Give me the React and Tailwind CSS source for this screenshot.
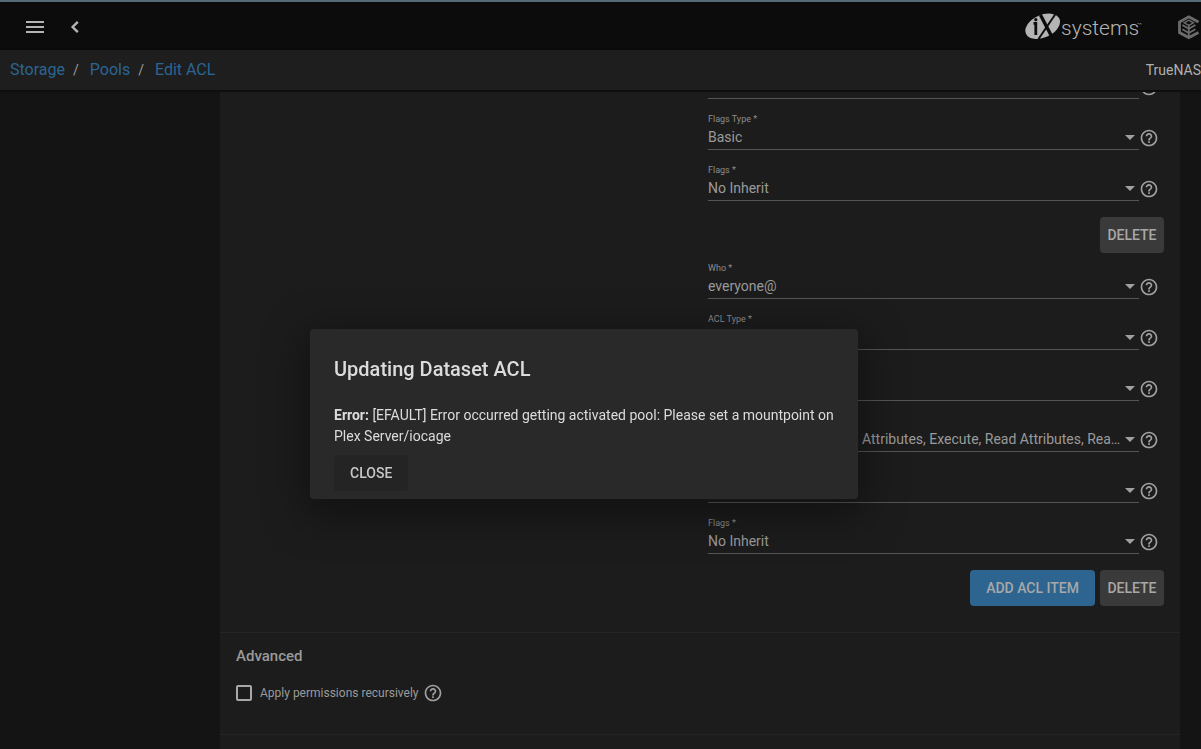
import { MdMenu, MdHelpOutline, MdArrowDropDown } from 'react-icons/md'

const CRUMBS = ['Storage', 'Pools', 'Edit ACL']

const FIRST_ITEM = [
  { id: 'perms-0', value: '' },
  { id: 'flagsType-0', label: 'Flags Type *', value: 'Basic' },
  { id: 'flags-0', label: 'Flags *', value: 'No Inherit' },
]

const SECOND_ITEM = [
  { id: 'who-1', label: 'Who *', value: 'everyone@' },
  { id: 'aclType-1', label: 'ACL Type *', value: 'Allow' },
  { id: 'permsType-1', label: 'Permissions Type *', value: 'Advanced' },
  { id: 'perms-1', label: 'Permissions *', value: 'Read Data, Read Named Attributes, Execute, Read Attributes, Read ACL' },
  { id: 'flagsType-1', label: 'Flags Type *', value: 'Basic' },
  { id: 'flags-1', label: 'Flags *', value: 'No Inherit' },
]

function IxLogo() {
  return (
    <svg width="117" height="32" viewBox="0 0 117 32" aria-label="iXsystems">
      <ellipse cx="17.7" cy="15.2" rx="18.3" ry="11.3" transform="rotate(-24 17.7 15.2)" fill="#b4b4b4" />
      <g fill="none" stroke="#0c0c0c">
        <path d="M15.5 4 L27.5 27" strokeWidth="3.4" />
        <path d="M30.5 3 L13.5 28" strokeWidth="2" />
        <path d="M8.5 12.3 H10.8 V24" strokeWidth="2.8" />
      </g>
      <circle cx="10.8" cy="8.7" r="1.6" fill="#0c0c0c" />
      <text x="36" y="24" fill="#b4b4b4" fontSize="21" fontWeight="300" fontFamily="Roboto">systems</text>
      <path d="M112.5 12.5 h1.6 M114.8 13.5 v-1 h1.4 v1" stroke="#777" strokeWidth="0.8" fill="none" />
    </svg>
  )
}

function TrueNasLogo() {
  return (
    <svg width="24" height="26" viewBox="0 0 24 26" fill="none" stroke="#6b6b6b">
      <path d="M21.5 8 L11.8 2.8 L2.5 8 V18.6 L11.8 23.6 L21.5 18.6" strokeWidth="2.8" />
      <path d="M11.8 6.2 L16.4 8.8 L11.8 11.4 L7.2 8.8 Z" strokeWidth="1.4" />
      <path d="M11.8 11 V22" strokeWidth="1.8" />
      <path d="M5.4 11 L11.8 14.8 L18.4 11 M5.4 15.2 L11.8 19 L18.4 15.2" strokeWidth="1.8" />
    </svg>
  )
}

function BackIcon() {
  return (
    <svg width="24" height="24" viewBox="0 0 24 24" fill="none" stroke="currentColor" strokeWidth="2.4">
      <path d="M14.8 6.8 L9.6 12 L14.8 17.2" />
    </svg>
  )
}

function SelectField({ id, label, value }) {
  return (
    <div className="flex h-[46px] items-end pr-[5px]">
      <div className="relative min-w-0 flex-1 border-b border-[#555]">
        {label && <label htmlFor={id} className="block text-[9px] leading-3 text-[#8c8c8c]">{label}</label>}
        <select id={id} aria-label={label ? undefined : 'Permissions'} defaultValue={value} className="block h-6 w-full appearance-none truncate pr-4 text-sm leading-6 text-[#9a9a9a]">
          <option>{value}</option>
        </select>
        <MdArrowDropDown size={24} className="pointer-events-none absolute -right-[3px] bottom-0 text-[#a0a0a0]" />
      </div>
      <MdHelpOutline size={20} className="mb-0.5 shrink-0 text-[#a0a0a0]" />
    </div>
  )
}

function GreyButton({ children }) {
  return (
    <button className="h-9 w-16 rounded-[4px] bg-[#3a3a3a] text-sm font-medium text-[#a8a8a8]">{children}</button>
  )
}

function ErrorDialog() {
  return (
    <div className="fixed inset-0 flex items-center justify-center pt-[79px] pr-[33px]">
      <div role="dialog" aria-labelledby="dialog-title" className="w-[548px] rounded-[4px] bg-[#292929] px-6 pt-6 pb-2 text-[#dcdcdc] shadow-[0_11px_40px_8px_rgba(0,0,0,0.35)]">
        <h1 id="dialog-title" className="text-xl leading-8 font-medium">Updating Dataset ACL</h1>
        <p className="mt-5 text-sm leading-[21px]">
          <b>Error:</b> [EFAULT] Error occurred getting activated pool: Please set a mountpoint on Plex Server/iocage
        </p>
        <button className="mt-2 h-9 rounded-[4px] bg-[#242424] px-4 text-sm font-medium text-[#c8c8c8]">CLOSE</button>
      </div>
    </div>
  )
}

export default function App() {
  return (
    <div className="flex h-screen flex-col overflow-hidden bg-[#141414] font-[Roboto,sans-serif] text-[#9a9a9a]">
      <header className="flex h-[50px] shrink-0 items-center justify-between border-t-2 border-[#566a77] bg-[#0c0c0c] pt-0.5">
        <div className="flex items-center gap-4 pl-[23px] text-[#b4b4b4]">
          <button aria-label="Menu"><MdMenu size={24} /></button>
          <button aria-label="Back"><BackIcon /></button>
        </div>
        <div className="flex items-center gap-[35px]">
          <IxLogo />
          <TrueNasLogo />
        </div>
      </header>

      <nav className="flex h-10 shrink-0 items-center justify-between bg-[#1e1e1e] pl-2.5 shadow-[0_1px_3px_rgba(0,0,0,0.5)]">
        <ol className="flex items-center text-base">
          {CRUMBS.map((c, i) => (
            <li key={c}>
              {i > 0 && <span className="pr-[11px] pl-2 text-sm">/</span>}
              <a href="#" className="text-[#2b6592]">{c}</a>
            </li>
          ))}
        </ol>
        <span className="text-sm text-[#b0b0b0]">TrueNAS</span>
      </nav>

      <main className="mt-0.5 min-h-0 flex-1 overflow-hidden pr-[21px] pl-[220px]">
        <div className="-mt-[39px] bg-[#1c1c1c]">
          <section className="grid grid-cols-2 gap-4 px-4 pb-[26px]">
            <div className="col-start-2">
              <div className="flex flex-col gap-[5px]">
                {FIRST_ITEM.map(f => <SelectField key={f.id} {...f} />)}
              </div>
              <div className="flex justify-end pt-4">
                <GreyButton>DELETE</GreyButton>
              </div>
              <div className="flex flex-col gap-[5px]">
                {SECOND_ITEM.map(f => <SelectField key={f.id} {...f} />)}
              </div>
              <div className="flex justify-end gap-[5px] pt-4">
                <button className="h-9 rounded-[4px] bg-[#2d6590] px-4 text-sm font-medium text-[#a8a8a8]">ADD ACL ITEM</button>
                <GreyButton>DELETE</GreyButton>
              </div>
            </div>
          </section>

          <section className="h-[102px] border-t border-[#242424] px-4 pt-[11px]">
            <h2 className="text-[15px] leading-6 font-medium">Advanced</h2>
            <div className="mt-[13px] flex items-center">
              <input id="recursive" type="checkbox" className="size-4 appearance-none rounded-[2px] border-2 border-[#a8a8a8]" />
              <label htmlFor="recursive" className="pl-2 text-xs leading-6">Apply permissions recursively</label>
              <MdHelpOutline size={20} className="ml-1 text-[#a0a0a0]" />
            </div>
          </section>
          <section className="h-10 border-t border-[#242424]" />
        </div>
      </main>

      <ErrorDialog />
    </div>
  )
}
